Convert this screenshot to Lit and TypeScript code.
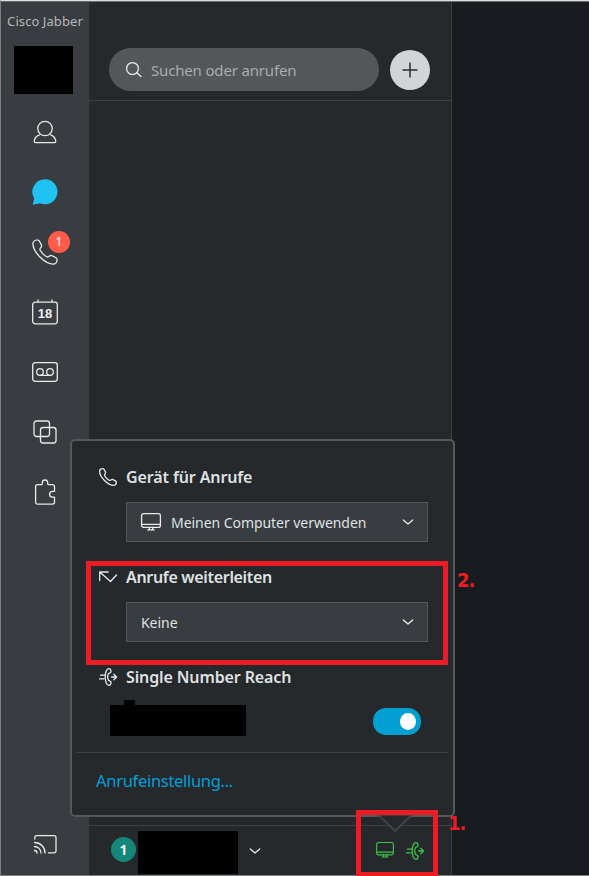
import { LitElement, html, css, svg } from "lit";
import { customElement } from "lit/decorators.js";

const handset = svg`<path d="M.9 4.600C.9 2.800 2.800 1 4.800 .9 6 .8 6.800 1.200 7.400 2.200L9.300 5.600C9.800 6.600 9.600 7.400 9 8.300L8.200 9.500C7.800 10.200 7.900 10.800 8.300 11.500 9.800 14 12 16.200 14.600 17.700 15.300 18.100 15.900 18.100 16.500 17.700L17.700 16.900C18.500 16.300 19.400 16.300 20.300 16.800L23.600 18.500C24.700 19.100 25.200 19.900 25.100 21 24.900 23.200 23.300 25.100 21.200 25.100 12.800 24.900 1 13.200 .9 4.600Z"/>`;

const reach = svg`<path d="M1.500 7.200h4M.5 10.800h4.500M12.500 9h5M14.800 6.200 17.600 9 14.800 11.800"/><path d="M11.600 4.500C12.400 3.400 12 .8 10 .7 7.400.6 6.200 5 6.200 9s1.200 8.400 3.800 8.300c2-.1 2.400-2.700 1.600-3.800-.5-.8-1.900-.600-2.400-1.600-.6-1.500-.6-4.300 0-5.800.5-1 1.900-.800 2.400-1.600Z"/>`;

const monitor = svg`<rect x=".6" y=".6" width="18.800" height="13.800" rx="2"/><path d="M1 11.400h18M8.300 14.500v2.300M11.700 14.500v2.300M6.800 16.900h6.400"/>`;

const chevron = html`<svg class="chevron" width="10" height="6" viewBox="0 0 10 6"><path d="M.3 1 5 5 9.700 1"/></svg>`;

@customElement("app-root")
export class AppRoot extends LitElement {
  static styles = css`
    :host {
      display: block;
      position: relative;
      width: 589px;
      height: 876px;
      overflow: hidden;
      background: #181b1f;
      color: #dfe1e2;
      font-family: "Noto Sans", "Open Sans", sans-serif;
      font-size: 14px;
    }
    * { box-sizing: border-box; }
    svg {
      display: block;
      fill: none;
      stroke: #e8eaeb;
      stroke-width: 1.3;
      stroke-linecap: round;
      stroke-linejoin: round;
      overflow: visible;
      flex: none;
    }
    .window {
      height: 876px;
      display: flex;
      border-top: 1px solid #dcdfdf;
      border-left: 1px solid #7d8182;
      border-bottom: 1px solid #7d8182;
      box-shadow: inset 0 1px #686c6d;
    }
    .rail {
      width: 88px;
      margin-top: 1px;
      background: #393c40;
      display: flex;
      flex-direction: column;
      align-items: center;
    }
    .title {
      height: 44px;
      line-height: 38px;
      font-size: 13px;
      color: #b4b7b9;
      white-space: nowrap;
      letter-spacing: 0.08px;
    }
    .photo {
      width: 59px;
      height: 48px;
      margin-right: 3px;
      background: #000;
    }
    .nav {
      margin-top: 8px;
      display: flex;
      flex-direction: column;
    }
    .item {
      position: relative;
      width: 60px;
      height: 60px;
      display: grid;
      place-items: center;
    }
    .badge {
      position: absolute;
      left: 33px;
      top: 9px;
      width: 22px;
      height: 22px;
      border-radius: 50%;
      background: #ff5c4a;
      color: #fff;
      font-size: 12px;
      line-height: 21px;
      text-align: center;
    }
    .chat { fill: #1fc2f3; stroke: none; }
    .day {
      fill: #eef0f0;
      stroke: none;
      font: 700 13px "Liberation Sans", sans-serif;
    }
    .cast { margin-top: auto; height: 62px; }
    .main {
      width: 363px;
      margin-top: 1px;
      background: #25292c;
      border-right: 1px solid #3b3e41;
      display: flex;
      flex-direction: column;
    }
    .header {
      height: 99px;
      padding: 46px 20px 0;
      display: flex;
      gap: 11px;
      border-bottom: 1px solid #3d4043;
    }
    .search {
      width: 270px;
      height: 43px;
      border-radius: 21.5px;
      background: #53575a;
      color: #a9adaf;
      display: flex;
      align-items: center;
      gap: 9px;
      padding-left: 17px;
      font-size: 15px;
      letter-spacing: -0.17px;
    }
    .add {
      width: 40px;
      height: 40px;
      margin-top: 2px;
      border-radius: 50%;
      background: #d2d5d6;
      display: grid;
      place-items: center;
    }
    .add svg { stroke: #292c2e; stroke-width: 1.5; stroke-linecap: butt; }
    .footer {
      height: 50px;
      margin-top: auto;
      padding: 0 27px 0 22px;
      border-top: 1px solid #3d4043;
      display: flex;
      align-items: center;
    }
    .avatar {
      width: 25px;
      height: 25px;
      margin-bottom: 2px;
      border-radius: 50%;
      background: #15877a;
      color: #fff;
      font-size: 15px;
      font-weight: 600;
      line-height: 24px;
      text-align: center;
    }
    .name {
      width: 100px;
      height: 43px;
      margin: 3px 12px 0 2px;
      background: #000;
    }
    .status { display: flex; gap: 12px; margin-left: auto; }
    .status svg { stroke: #40c24c; }
    .popup {
      position: absolute;
      left: 70px;
      top: 439px;
      width: 385px;
      height: 378px;
      background: #25292c;
      border: 2px solid #55595b;
      border-radius: 5px;
      padding: 21px 4px 0;
    }
    .heading {
      height: 30px;
      display: flex;
      align-items: center;
      gap: 9px;
      padding-left: 23px;
      font-size: 16px;
      font-weight: 600;
      white-space: nowrap;
      letter-spacing: -0.12px;
    }
    .heading.forward { letter-spacing: -0.32px; }
    .heading .handset { stroke-width: 1.9; }
    .select {
      width: 302px;
      height: 40px;
      margin: 10px 0 20px 50px;
      padding: 0 14px;
      display: flex;
      align-items: center;
      background: #393c40;
      border: 1px solid #54585a;
      white-space: nowrap;
      letter-spacing: -0.05px;
    }
    .select svg:first-child { margin-right: 10px; }
    .select .chevron { margin-left: auto; }
    .number {
      height: 60px;
      padding: 8px 28px 0 34px;
      display: flex;
      justify-content: space-between;
      align-items: flex-start;
    }
    .redacted {
      width: 136px;
      height: 36px;
      background: #000;
      clip-path: polygon(0 5px, 14px 5px, 14px 0, 25px 0, 25px 5px, 100% 5px, 100% 100%, 0 100%);
    }
    .toggle {
      width: 48px;
      height: 27px;
      margin-top: 8px;
      padding: 5px;
      border-radius: 13px;
      background: #02a0d2;
      display: flex;
      justify-content: flex-end;
    }
    .knob { width: 16px; height: 17px; border-radius: 50%; background: #fff; }
    .divider { height: 1px; background: #3d4043; margin: 0 1px 0 0; }
    .link {
      padding-left: 20px;
      line-height: 55px;
      font-size: 16.5px;
      letter-spacing: -0.3px;
      color: #049fd9;
    }
    .caret {
      position: absolute;
      left: 378px;
      top: 815px;
    }
    .caret path { fill: #25292c; stroke: #414548; stroke-width: 1.8; }
    .mark {
      position: absolute;
      border: 5px solid #ed1c24;
    }
    .forward-mark { left: 86px; top: 561px; width: 362px; height: 104px; }
    .status-mark { left: 356px; top: 810px; width: 82px; height: 66px; border-bottom-width: 4px; }
    .step {
      position: absolute;
      font: 700 20px/20px "DejaVu Sans Condensed", "DejaVu Sans", sans-serif;
      color: #ed1c24;
      letter-spacing: -1px;
    }
    .first { left: 448px; top: 813px; }
    .second { left: 457px; top: 570px; }
  `;

  render() {
    return html`
      <div class="window">
        <div class="rail">
          <div class="title">Cisco Jabber</div>
          <div class="photo"></div>
          <div class="nav">
            <div class="item"><svg width="22" height="22" viewBox="0 0 22 22"><circle cx="11" cy="7.500" r="7.200"/><path d="M5.600 13.800C2.600 14.500.3 17.500.3 20.300c0 .9.400 1.300 1.200 1.300h19c.8 0 1.200-.4 1.200-1.300 0-2.800-2.300-5.800-5.300-6.500"/></svg></div>
            <div class="item"><svg class="chat" width="26" height="26" viewBox="0 0 26 26"><path d="M13.300.3a12.500 12.500 0 1 1-5.200 24L.7 25.700l1.500-6.500A12.500 12.500 0 0 1 13.300.3Z"/></svg></div>
            <div class="item"><svg width="26" height="26" viewBox="0 0 26 26">${handset}</svg><span class="badge">1</span></div>
            <div class="item"><svg width="26" height="26" viewBox="0 0 26 26"><rect x=".7" y="3.200" width="24.600" height="21.600" rx="2.500"/><path d="M6 .9v1.800M20 .9v1.800"/><text class="day" x="13" y="18.500" text-anchor="middle">18</text></svg></div>
            <div class="item"><svg width="26" height="20" viewBox="0 0 26 20"><rect x=".7" y=".7" width="24.600" height="18.600" rx="2.500"/><circle cx="8" cy="10" r="3.300"/><circle cx="18" cy="10" r="3.300"/><path d="M8 13.300h10"/></svg></div>
            <div class="item"><svg width="24" height="24" viewBox="0 0 24 24"><rect x="1" y="1" width="15.500" height="15.500" rx="2.500"/><rect x="7.500" y="7.500" width="15.500" height="15.500" rx="2.500"/></svg></div>
            <div class="item"><svg width="20" height="26" viewBox="0 0 20 26"><path d="M2.600 5.700H6.200Q7.300 5.700 7.300 4.700V3.700a2.700 2.700 0 0 1 5.400 0v1Q12.700 5.700 13.800 5.700H17.500q2 0 2 2V12.300h-2a2.900 2.900 0 0 0 0 5.800h2v5q0 2-2 2H2.600q-2 0-2-2V7.700q0-2 2-2Z"/></svg></div>
          </div>
          <div class="item cast"><svg width="23" height="19" viewBox="0 0 23 19"><path d="M.8 4V2.500Q.8.700 2.600.700h17.600Q22 .700 22 2.500v13.600q0 1.800-1.800 1.800H14.500M.5 7.500A10.500 10.500 0 0 1 11 18M.5 11.500A6.500 6.500 0 0 1 7 18M.5 15.500A2.600 2.600 0 0 1 3 18"/></svg></div>
        </div>
        <div class="main">
          <div class="header">
            <div class="search">
              <svg width="16" height="16" viewBox="0 0 16 16"><circle cx="6.500" cy="6.500" r="5.900"/><path d="m10.800 10.800 4.200 3.800"/></svg>
              <span>Suchen oder anrufen</span>
            </div>
            <div class="add"><svg width="16" height="16" viewBox="0 0 16 16"><path d="M.5 8h15M8 .5v15"/></svg></div>
          </div>
          <div class="footer">
            <div class="avatar">1</div>
            <div class="name"></div>
            ${chevron}
            <div class="status">
              <svg width="18" height="16" viewBox="0 0 20 18">${monitor}</svg>
              <svg width="18" height="18" viewBox="0 0 18 18">${reach}</svg>
            </div>
          </div>
        </div>
      </div>

      <div class="popup">
        <div class="heading"><svg class="handset" width="18" height="18" viewBox="0 0 26 26">${handset}</svg><span>Gerät für Anrufe</span></div>
        <div class="select"><svg width="20" height="18" viewBox="0 0 20 18">${monitor}</svg><span>Meinen Computer verwenden</span>${chevron}</div>
        <div class="heading forward"><svg width="18" height="12" viewBox="0 0 18 12"><path d="M.7 9.500V1h8.500M1 1.200l10.500 9.300 6-6.500"/></svg><span>Anrufe weiterleiten</span></div>
        <div class="select"><span>Keine</span>${chevron}</div>
        <div class="heading"><svg width="18" height="18" viewBox="0 0 18 18">${reach}</svg><span>Single Number Reach</span></div>
        <div class="number"><div class="redacted"></div><div class="toggle"><div class="knob"></div></div></div>
        <div class="divider"></div>
        <div class="link">Anrufeinstellung...</div>
      </div>
      <svg class="caret" width="34" height="18" viewBox="0 0 34 18"><path d="M1 .5 17 16 33 .5"/></svg>

      <div class="mark forward-mark"></div>
      <div class="mark status-mark"></div>
      <span class="step first">1.</span>
      <span class="step second">2.</span>
    `;
  }
}
